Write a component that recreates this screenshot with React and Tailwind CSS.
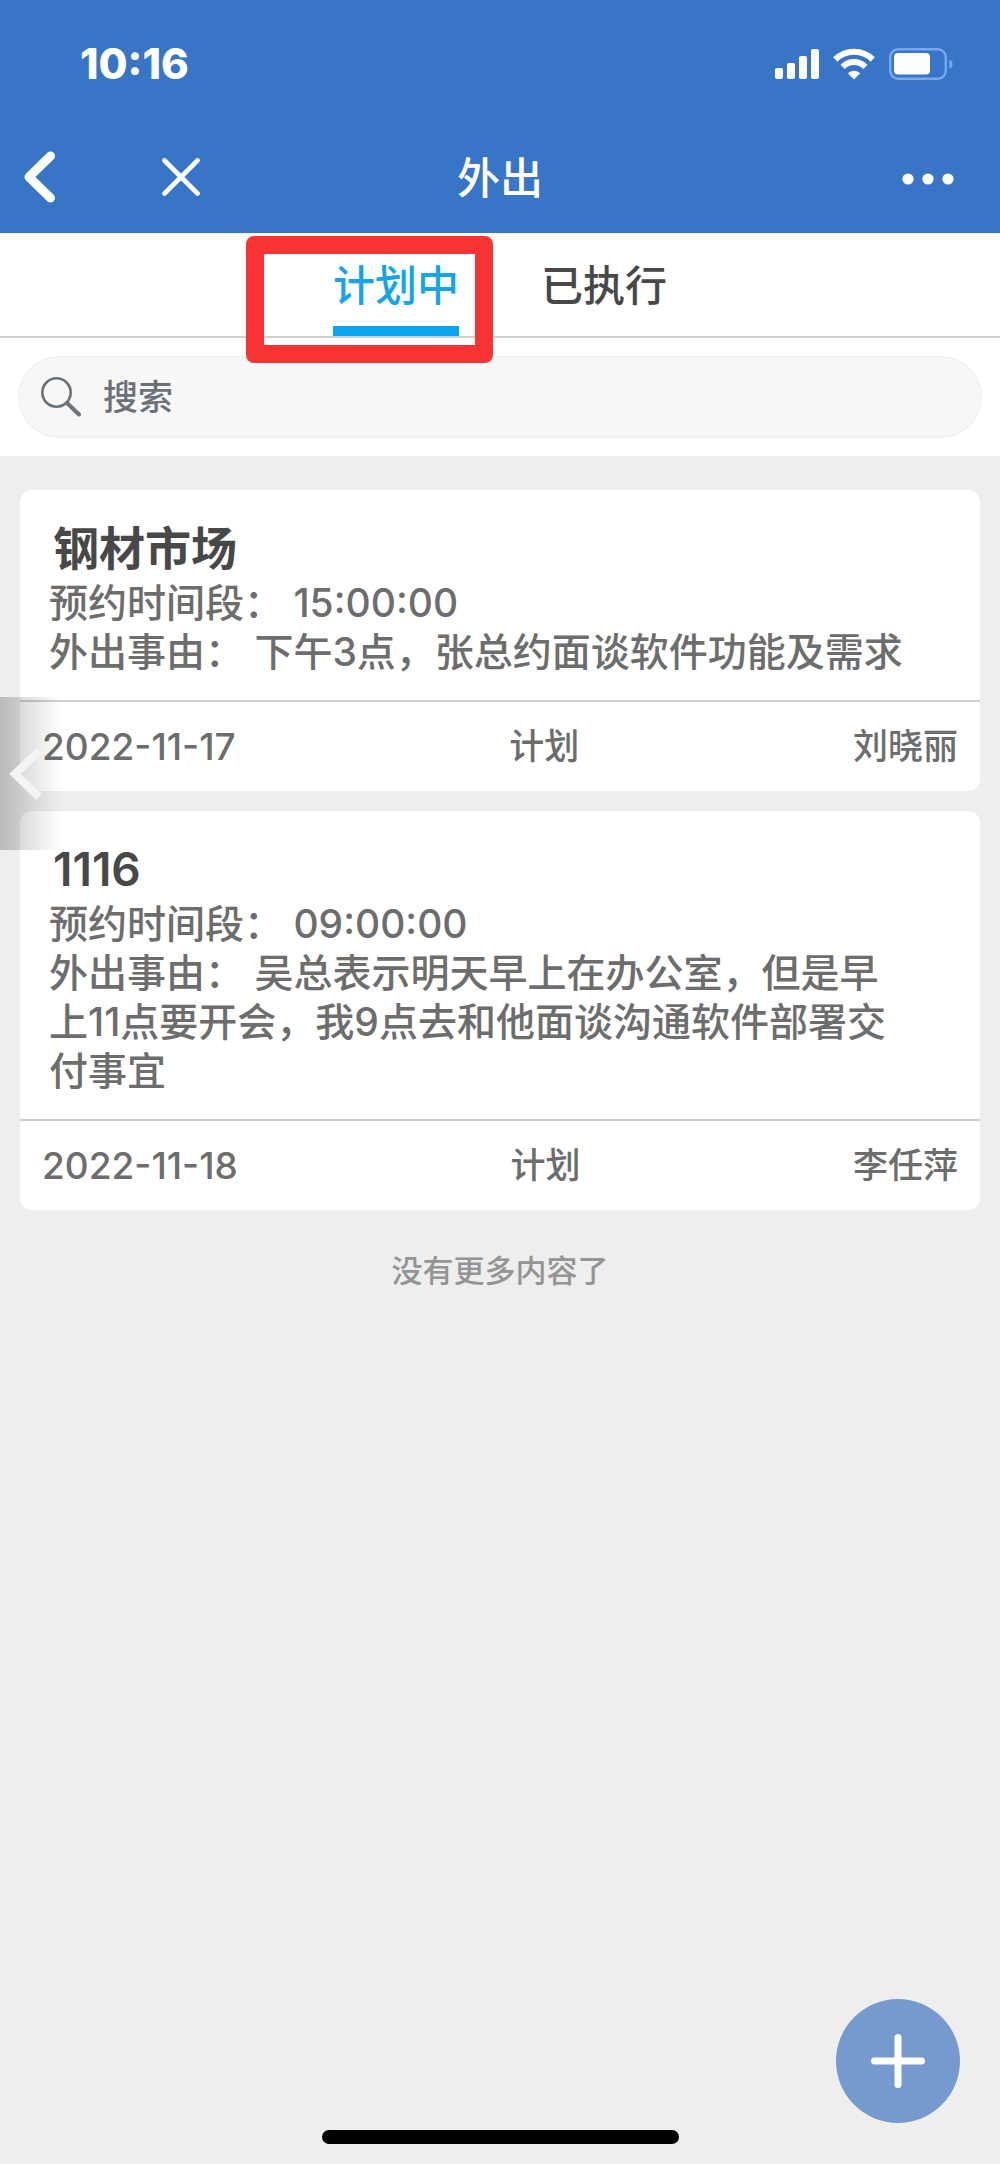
import { useState } from "react";

const plans = [
  {
    id: 1,
    title: "钢材市场",
    time: "15:00:00",
    reason: "下午3点，张总约面谈软件功能及需求",
    date: "2022-11-17",
    status: "计划",
    owner: "刘晓丽",
  },
  {
    id: 2,
    title: "1116",
    time: "09:00:00",
    reason: "吴总表示明天早上在办公室，但是早上11点要开会，我9点去和他面谈沟通软件部署交付事宜",
    date: "2022-11-18",
    status: "计划",
    owner: "李任萍",
  },
];

function StatusBar() {
  return (
    <div className="flex h-32 items-center justify-between pl-20 pr-[46px]">
      <span className="text-[42px] leading-none font-extrabold">10:16</span>
      <div className="flex items-center gap-[14px]">
        <svg width="44" height="30" viewBox="0 0 44 30" fill="currentColor">
          <rect x="0" y="19" width="8" height="11" rx="2" />
          <rect x="12" y="14" width="8" height="16" rx="2" />
          <rect x="24" y="7" width="8" height="23" rx="2" />
          <rect x="36" y="0" width="8" height="30" rx="2" />
        </svg>
        <svg width="42" height="32" viewBox="0 0 42 32">
          <g fill="none" stroke="currentColor" strokeWidth="6">
            <path d="M2.3 11.5a26.5 26.5 0 0 1 37.4 0" />
            <path d="M9.6 18.8a16.2 16.2 0 0 1 22.8 0" />
          </g>
          <path d="M21 31.5l-6.2-6.2a8.8 8.8 0 0 1 12.4 0z" fill="currentColor" />
        </svg>
        <svg width="65" height="32" viewBox="0 0 65 32">
          <rect x="1.2" y="1.2" width="55.6" height="29.6" rx="8" fill="none" stroke="#7aa8ec" strokeWidth="2.4" />
          <rect x="5" y="5" width="36" height="21.5" rx="4" fill="currentColor" />
          <path d="M60.500 11.5c4 1.500 4 8 0 9.500z" fill="#7aa8ec" />
        </svg>
      </div>
    </div>
  );
}

function NavBar() {
  return (
    <div className="grid h-[105px] grid-cols-[1fr_auto_1fr] items-center pb-1">
      <div className="flex items-center gap-[104px] pb-[3px] pl-[22px]">
        <button aria-label="返回">
          <svg width="36" height="54" viewBox="0 0 36 54" fill="none" stroke="currentColor" strokeWidth="9" strokeLinecap="round" strokeLinejoin="round">
            <path d="M28.5 6L7 27l21.5 21" />
          </svg>
        </button>
        <button aria-label="关闭">
          <svg width="38" height="38" viewBox="0 0 38 38" fill="none" stroke="currentColor" strokeWidth="4.6" strokeLinecap="round">
            <path d="M2.5 2.5l33 33M35.5 2.5l-33 33" />
          </svg>
        </button>
      </div>
      <h1 className="text-[43px] leading-none font-medium">外出</h1>
      <button aria-label="更多" className="mr-[46px] justify-self-end">
        <svg width="52" height="12" viewBox="0 0 52 12" fill="currentColor">
          <circle cx="6" cy="6" r="5.6" />
          <circle cx="26" cy="6" r="5.6" />
          <circle cx="46" cy="6" r="5.6" />
        </svg>
      </button>
    </div>
  );
}

function PlanCard({ plan }) {
  return (
    <article className="rounded-xl bg-white">
      <div className="border-b-2 border-[#cfcfcf] pt-7 pr-[67px] pb-6 pl-[29px] text-[39px] leading-[49px] text-[#6d6d6d]">
        <h2 className="pl-1 text-[46px] leading-[60px] font-semibold text-[#484848]">{plan.title}</h2>
        <p>预约时间段： {plan.time}</p>
        <p>外出事由： {plan.reason}</p>
      </div>
      <div className="flex h-[89px] items-center justify-between px-[22px] text-[35px] leading-none text-[#6d6d6d]">
        <span className="text-[37px]">{plan.date}</span>
        <span>{plan.status}</span>
        <span>{plan.owner}</span>
      </div>
    </article>
  );
}

export default function App() {
  const [tab, setTab] = useState("plan");
  const [keyword, setKeyword] = useState("");

  const active = "border-[#0aa5ee] text-[#16a4e8]";
  const idle = "border-transparent text-[#484848]";

  return (
    <div lang="zh-CN" className="flex min-h-screen flex-col bg-[#eeeeee] font-['Inter','Noto_Sans_CJK_SC',sans-serif] font-medium">
      <header className="bg-[#3875c6] text-white">
        <StatusBar />
        <NavBar />
      </header>

      <nav className="flex h-[105px] justify-center gap-[82px] border-b-2 border-[#cfcfcf] bg-white text-[42px] leading-none">
        <div className="relative flex">
          <button onClick={() => setTab("plan")} className={`border-b-10 pt-3 ${tab === "plan" ? active : idle}`}>
            计划中
          </button>
          {/* highlight frame around the first tab */}
          <div className="pointer-events-none absolute top-[3px] -right-[34px] z-10 h-[127px] w-[247px] rounded-lg border-18 border-[#f93334]" />
        </div>
        <button onClick={() => setTab("done")} className={`border-b-10 pt-3 ${tab === "done" ? active : idle}`}>
          已执行
        </button>
      </nav>

      <div className="bg-white px-[18px] py-[18px]">
        <label className="flex h-[82px] items-center gap-[22px] rounded-full border-2 border-[#f2f2f2] bg-[#f7f7f7] pl-[21px] text-[#6b7277]">
          <svg width="40" height="40" viewBox="0 0 40 40" fill="none" stroke="currentColor" strokeLinecap="round">
            <circle cx="15.5" cy="15.5" r="14.2" strokeWidth="2.6" />
            <path d="M26 26l12 11.5" strokeWidth="4" />
          </svg>
          <input
            type="text"
            aria-label="搜索"
            placeholder="搜索"
            value={keyword}
            onChange={e => setKeyword(e.target.value)}
            className="min-w-0 flex-1 bg-transparent text-[35px] outline-none placeholder:text-[#6b7277]"
          />
        </label>
      </div>

      <main className="relative flex flex-1 flex-col gap-5 px-5 pt-[34px]">
        {plans.map(p => <PlanCard key={p.id} plan={p} />)}
        <p className="mt-5 text-center text-[31px] leading-[42px] text-[#949494]">没有更多内容了</p>

        <button aria-label="展开" className="absolute top-[241px] left-0 flex h-[153px] w-15 items-center bg-linear-to-r from-black/22 to-transparent pl-2">
          <svg width="36" height="54" viewBox="0 0 36 54" fill="none" stroke="#f4f4f4" strokeWidth="8">
            <path d="M31 4L7 27l24 23" />
          </svg>
        </button>
      </main>

      <button aria-label="新增" className="fixed right-10 bottom-[41px] flex size-[124px] items-center justify-center rounded-full bg-[#779ace] text-white">
        <svg width="56" height="56" viewBox="0 0 56 56" fill="none" stroke="currentColor" strokeWidth="7" strokeLinecap="round">
          <path d="M28 4.5v47M4.5 28h47" />
        </svg>
      </button>
      <div className="fixed inset-x-0 bottom-5 mx-auto h-[14px] w-[357px] rounded-full bg-black" />
    </div>
  );
}
